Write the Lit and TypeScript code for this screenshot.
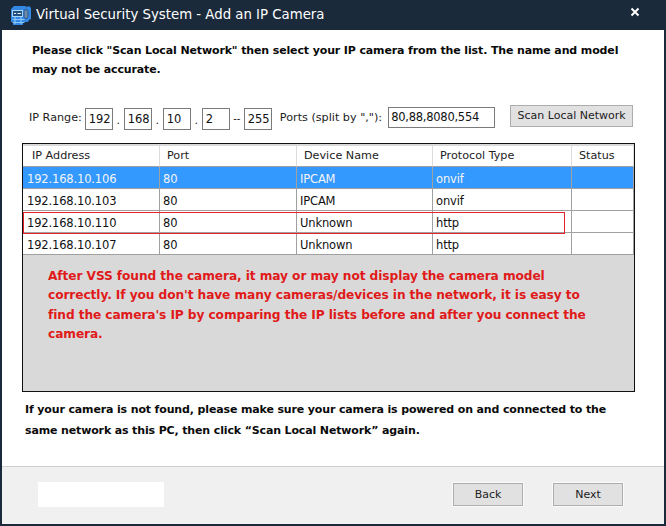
import { LitElement, html, css } from "lit";
import { customElement } from "lit/decorators.js";

const COLS = ["IP Address", "Port", "Device Name", "Protocol Type", "Status"];
const ROWS = [
  ["192.168.10.106", "80", "IPCAM", "onvif", ""],
  ["192.168.10.103", "80", "IPCAM", "onvif", ""],
  ["192.168.10.110", "80", "Unknown", "http", ""],
  ["192.168.10.107", "80", "Unknown", "http", ""],
];

@customElement("app-root")
export class AppRoot extends LitElement {
  static styles = css`
    :host { display: block; width: 666px; height: 526px; font-family: "DejaVu Sans", sans-serif; }
    * { box-sizing: border-box; }
    .win { width: 666px; height: 526px; background: #1b2a3a; padding: 0 2px 2px; display: flex; flex-direction: column; }
    .title { height: 30px; flex: none; display: flex; align-items: center; color: #fff; font-size: 13.3px; padding-left: 9px; }
    .title svg { flex: none; margin-right: 5px; }
    .title span { flex: 1; white-space: nowrap; position: relative; top: -1px; }
    .close { flex: none; width: 30px; height: 30px; display: flex; justify-content: center; padding: 7px 0 0 0; margin-right: 12px; }
    .content { flex: 1; background: #fff; display: flex; flex-direction: column; min-height: 0; }
    .main { flex: 1; padding: 11px 0 0 0; }
    .intro { font: bold 11px/19px "DejaVu Sans", sans-serif; letter-spacing: -0.13px; color: #0a0a0a; margin: 0 0 0 30px; width: 600px; }
    .range { display: flex; align-items: flex-start; height: 25px; margin: 29px 0 0 27px; font-size: 11.2px; color: #222; }
    .lbl { margin-top: 3px; white-space: nowrap; }
    .box { border: 1px solid #7a7a7a; height: 22px; width: 28px; font-size: 11.5px; letter-spacing: -0.15px; color: #111; line-height: 20px; padding-left: 3px; white-space: nowrap; }
    .box.first { margin-left: 3px; }
    .sep { width: 11px; text-align: center; margin-top: 6px; font-size: 11px; }
    .dash { width: 14px; text-align: center; margin-top: 5px; font-size: 10px; }
    .ports { margin: 3px 6px 0 8px; white-space: nowrap; }
    .pbox { width: 107px; height: 21px; margin-top: -1px; line-height: 19px; padding-left: 2px; letter-spacing: -0.25px; }
    .scan { margin: -3px 0 0 15px; width: 123px; height: 22px; background: #e1e1e1; border: 1px solid #adadad; font-size: 11px; color: #222; line-height: 20px; text-align: center; white-space: nowrap; }
    .table { margin: 10px 0 0 20px; width: 613px; height: 249px; border: 1px solid #111; background: #d9d9d9; padding: 2px 0 0 0; position: relative; }
    .grid { display: grid; grid-template-columns: 137px 137px 136px 139px 62px; }
    .hd { height: 21px; background: #fff; border-right: 1px solid #dcdcdc; border-bottom: 1px solid #a0a0a0; font-size: 11.2px; color: #222; padding: 3px 0 0 7px; white-space: nowrap; }
    .hd.lead { padding-left: 9px; }
    .cell { height: 22px; background: #fff; border-right: 1px solid #a0a0a0; border-bottom: 1px solid #a0a0a0; font-size: 11.5px; letter-spacing: -0.15px; color: #111; padding: 5px 0 0 3px; white-space: nowrap; }
    .cell.lead { padding-left: 4px; }
    .cell.sel { background: #3399ff; color: #f4f4f4; }
    .note { margin: 12px 0 0 25px; width: 545px; color: #e01a1a; font: bold 12.2px/19.4px "DejaVu Sans", sans-serif; letter-spacing: -0.09px; }
    .red { position: absolute; left: 0; top: 68px; width: 542px; height: 22px; border: 1px solid #e8202a; pointer-events: none; }
    .outro { font: bold 11px/21px "DejaVu Sans", sans-serif; letter-spacing: -0.14px; color: #0a0a0a; margin: 7px 0 0 23px; width: 600px; }
    .foot { flex: none; height: 58px; background: #f0f0f0; border-top: 1px solid #d0d0d0; display: flex; align-items: flex-start; padding: 15px 41px 0 36px; }
    .blank { width: 126px; height: 25px; background: #fff; }
    .spacer { flex: 1; }
    .btn { width: 70px; height: 23px; margin-left: 30px; margin-top: 1px; background: #e1e1e1; border: 1px solid #adadad; outline: 1px solid #fbfbfb; font-size: 11px; color: #222; text-align: center; line-height: 21px; }
  `;

  render() {
    return html`<div class="win">
      <div class="title">
        <svg width="20" height="20" viewBox="0 0 20 20" fill="none">
          <path d="M3 1h11l2 1 2-1 2 2v11l-2 1-1 2H12v3H2v-3H0V4z" fill="#3388e4"/>
          <rect x="1.5" y="5.5" width="10" height="6" fill="#24507e" stroke="#a8d6fb"/>
          <path d="M3 8.500h2M6.500 8.500h3.500" stroke="#e2f1fe"/>
          <rect x="13" y="4.500" width="4" height="9" rx="2" fill="#6c8aa8" stroke="#2a5a90"/>
          <path d="M1.500 14.500h12M4 12v7M10 12v7M1.500 17.500h12" stroke="#8cc6f8" stroke-width="1.100"/>
        </svg>
        <span>Virtual Security System - Add an IP Camera</span>
        <div class="close">
          <svg width="10" height="10" viewBox="0 0 10 10"><path d="M1.500 1.500l7 7M8.500 1.500l-7 7" stroke="#fff" stroke-width="2"/></svg>
        </div>
      </div>
      <div class="content">
        <div class="main">
          <p class="intro">Please click "Scan Local Network" then select your IP camera from the list. The name and model may not be accurate.</p>
          <div class="range">
            <span class="lbl">IP Range:</span>
            <div class="box first">192</div><span class="sep">.</span>
            <div class="box">168</div><span class="sep">.</span>
            <div class="box">10</div><span class="sep">.</span>
            <div class="box">2</div><span class="dash">--</span>
            <div class="box">255</div>
            <span class="lbl ports">Ports (split by ","):</span>
            <div class="box pbox">80,88,8080,554</div>
            <div class="scan">Scan Local Network</div>
          </div>
          <div class="table">
            <div class="grid">
              ${COLS.map((c, j) => html`<div class="hd ${j === 0 ? "lead" : ""}">${c}</div>`)}
              ${ROWS.map((r, i) => r.map((c, j) => html`<div class="cell ${i === 0 ? "sel" : ""} ${j === 0 ? "lead" : ""}">${c}</div>`))}
            </div>
            <div class="red"></div>
            <div class="note">After VSS found the camera, it may or may not display the camera model correctly. If you don't have many cameras/devices in the network, it is easy to find the camera's IP by comparing the IP lists before and after you connect the camera.</div>
          </div>
          <p class="outro">If your camera is not found, please make sure your camera is powered on and connected to the same network as this PC, then click “Scan Local Network” again.</p>
        </div>
        <div class="foot">
          <div class="blank"></div>
          <div class="spacer"></div>
          <div class="btn">Back</div>
          <div class="btn">Next</div>
        </div>
      </div>
    </div>`;
  }
}
